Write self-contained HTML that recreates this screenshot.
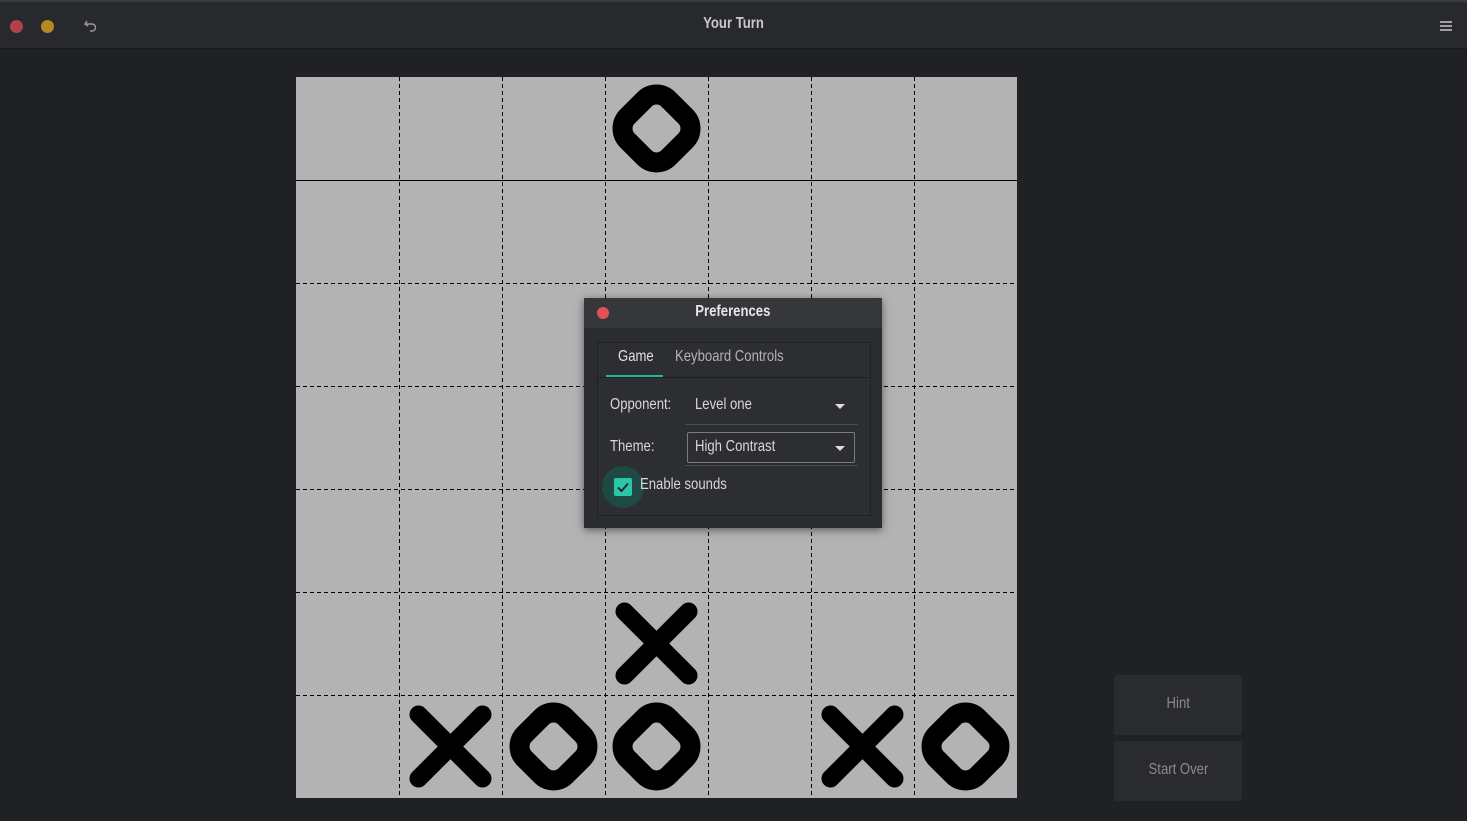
<!DOCTYPE html>
<html><head><meta charset="utf-8"><style>
body{margin:0;width:1467px;height:821px;background:#202125;font-family:"Liberation Sans",sans-serif;overflow:hidden;position:relative}
.hdr{position:absolute;left:0;top:0;width:1467px;height:49px;background:#28292d;border-bottom:1px solid #1a1b1e;border-top:2px solid #3a3b3f;box-sizing:border-box}
.title{position:absolute;left:0;width:1467px;top:13px;text-align:center;color:#c9c9c9;font-size:16px;font-weight:bold;transform:scaleX(.82)}
.dot{position:absolute;top:18px;width:13px;height:13px;border-radius:50%}
.btn{position:absolute;left:1114px;width:128px;height:60px;background:#2a2b2f;border-radius:3px;color:#8a8a8a;font-size:16px;text-align:center;line-height:58px}
.btn span{display:inline-block;transform:scaleX(.82)}
.dlg{position:absolute;left:584px;top:298px;width:298px;height:230px;background:#2b2c30;box-shadow:0 2px 8px rgba(0,0,0,.5)}
.dh{height:30px;background:#36373b;color:#e6e6e6;font-weight:bold;font-size:16px;text-align:center;line-height:28px;position:relative}
.dh b{display:inline-block;transform:scaleX(.82)}
.pane{position:absolute;left:13px;top:44px;width:272px;height:172px;border:1px solid #1f2023;background:#2d2e32}
.t{position:absolute;color:#d8d8d8;font-size:16px;transform:scaleX(.82);transform-origin:left;white-space:nowrap}
</style></head><body>
<div class="hdr">
<div class="dot" style="left:10px;background:#b0424b"></div>
<div class="dot" style="left:41px;background:#b48a22"></div>
<svg style="position:absolute;left:83px;top:16px" width="16" height="16" viewBox="0 0 16 16"><path d="M4 3 L2 6 L5 8 M2.5 6 H9 a3.5 3.5 0 0 1 0 7 H7" fill="none" stroke="#9a9a9a" stroke-width="1.4"/></svg>
<div class="title">Your Turn</div>
<div style="position:absolute;left:1440px;top:19px;width:12px;height:2px;background:#a0a0a0;box-shadow:0 4px 0 #a0a0a0,0 8px 0 #a0a0a0"></div>
</div>
<svg style="position:absolute;left:296px;top:77px" width="721" height="721" viewBox="0 0 721 721">
<rect width="721" height="721" fill="#b3b3b3"/>
<g stroke="#000" stroke-width="1" stroke-dasharray="4,3">
<line x1="103.5" y1="0" x2="103.5" y2="721"/><line x1="206.5" y1="0" x2="206.5" y2="721"/><line x1="309.5" y1="0" x2="309.5" y2="721"/><line x1="412.5" y1="0" x2="412.5" y2="721"/><line x1="515.5" y1="0" x2="515.5" y2="721"/><line x1="618.5" y1="0" x2="618.5" y2="721"/>
<line x1="0" y1="206.5" x2="721" y2="206.5"/><line x1="0" y1="309.5" x2="721" y2="309.5"/><line x1="0" y1="412.5" x2="721" y2="412.5"/><line x1="0" y1="515.5" x2="721" y2="515.5"/><line x1="0" y1="618.5" x2="721" y2="618.5"/>
</g>
<line x1="0" y1="103.5" x2="721" y2="103.5" stroke="#000" stroke-width="1"/>
<defs>
<g id="o"><rect x="-29" y="-29" width="58" height="58" rx="17" transform="rotate(45)" fill="none" stroke="#000" stroke-width="20"/></g>
<g id="x" stroke="#000" stroke-width="18" stroke-linecap="round"><line x1="-32" y1="-32" x2="32" y2="32"/><line x1="32" y1="-32" x2="-32" y2="32"/></g>
</defs>
<use href="#o" x="360.5" y="51.5"/>
<use href="#x" x="360.5" y="566.5"/>
<use href="#x" x="154.5" y="669.5"/>
<use href="#o" x="257.5" y="669.5"/>
<use href="#o" x="360.5" y="669.5"/>
<use href="#x" x="566.5" y="669.5"/>
<use href="#o" x="669.5" y="669.5"/>
</svg>
<div class="dlg">
<div class="dh"><span style="position:absolute;left:13px;top:9px;width:12px;height:12px;border-radius:50%;background:#e0525a"></span><b>Preferences</b></div>
<div class="pane">
<div style="position:absolute;left:0;top:34px;width:272px;border-top:1px solid #1f2023"></div>
<div style="position:absolute;left:8px;top:32px;width:57px;height:2px;background:#2ab59a"></div>
<div class="t" style="left:20px;top:5px;color:#e0e0e0">Game</div>
<div class="t" style="left:77px;top:5px;color:#b4b4b4">Keyboard Controls</div>
<div class="t" style="left:12px;top:53px">Opponent:</div>
<div class="t" style="left:97px;top:53px">Level one</div>
<div style="position:absolute;left:87px;top:81px;width:173px;border-top:1px solid #4a4b4f"></div>
<div class="t" style="left:12px;top:95px">Theme:</div>
<div style="position:absolute;left:89px;top:89px;width:168px;height:31px;border:1px solid #7a7b7e;border-radius:2px;box-sizing:border-box"></div>
<div class="t" style="left:97px;top:95px">High Contrast</div>
<div style="position:absolute;left:87px;top:122px;width:173px;border-top:1px solid #4a4b4f"></div>
<svg style="position:absolute;left:237px;top:61px" width="10" height="6"><path d="M0 0H10L5 5Z" fill="#ddd"/></svg>
<svg style="position:absolute;left:237px;top:103px" width="10" height="6"><path d="M0 0H10L5 5Z" fill="#ddd"/></svg>
<div style="position:absolute;left:4px;top:123px;width:42px;height:42px;border-radius:50%;background:#1f4a43"></div>
<div style="position:absolute;left:16px;top:135px;width:18px;height:18px;border-radius:2px;background:#2bc6a7"></div>
<svg style="position:absolute;left:16px;top:135px" width="18" height="18"><path d="M4 9.5 L7.5 13 L14 5.5" fill="none" stroke="#1d2a2a" stroke-width="2"/></svg>
<div class="t" style="left:42px;top:133px">Enable sounds</div>
</div>
</div>
<div class="btn" style="top:675px"><span>Hint</span></div>
<div class="btn" style="top:741px"><span>Start Over</span></div>
</body></html>
